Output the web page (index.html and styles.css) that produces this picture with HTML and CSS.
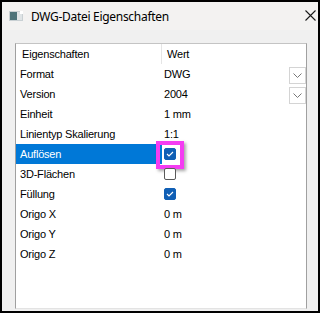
FILE: index.html
```html
<!DOCTYPE html>
<html lang="de">
<head>
    <meta charset="UTF-8">
    <title>DWG-Datei Eigenschaften</title>
    <link rel="stylesheet" href="styles.css">
</head>
<body>
    <div class="window">
        <div class="titlebar">
            <svg class="app-icon" width="14" height="10" viewBox="0 0 14 10">
                <rect x="0" y="0" width="14" height="10" fill="#c9d0d3"/>
                <rect x="1" y="1" width="7" height="8" fill="#4d7379"/>
                <rect x="8" y="1" width="5" height="8" fill="#dfe4e6"/>
                <rect x="11" y="0" width="3" height="3" fill="#ffffff"/>
            </svg>
            <span class="title">DWG-Datei Eigenschaften</span>
            <svg class="close" width="11" height="11" viewBox="0 0 11 11">
                <path d="M0.5 0.5 L10.5 10.5 M10.5 0.5 L0.5 10.5" stroke="#1a1a1a" stroke-width="1.1"/>
            </svg>
        </div>
        <div class="content">
            <div class="grid">
                <div class="row header">
                    <div class="name">Eigenschaften</div>
                    <div class="value">Wert</div>
                </div>
                <div class="row">
                    <div class="name">Format</div>
                    <div class="value">DWG<span class="drop"><svg width="9" height="5" viewBox="0 0 9 5"><path d="M0.5 0.5 L4.5 4.5 L8.5 0.5" fill="none" stroke="#777" stroke-width="1"/></svg></span></div>
                </div>
                <div class="row">
                    <div class="name">Version</div>
                    <div class="value">2004<span class="drop"><svg width="9" height="5" viewBox="0 0 9 5"><path d="M0.5 0.5 L4.5 4.5 L8.5 0.5" fill="none" stroke="#777" stroke-width="1"/></svg></span></div>
                </div>
                <div class="row">
                    <div class="name">Einheit</div>
                    <div class="value">1 mm</div>
                </div>
                <div class="row">
                    <div class="name">Linientyp Skalierung</div>
                    <div class="value">1:1</div>
                </div>
                <div class="row selected">
                    <div class="name">Auflösen</div>
                    <div class="value">
                        <span class="check on"><svg width="8" height="6" viewBox="0 0 8 6"><path d="M1 3 L3 5 L7 1" fill="none" stroke="#fff" stroke-width="1.1"/></svg><span class="mark"></span></span>
                    </div>
                </div>
                <div class="row">
                    <div class="name">3D-Flächen</div>
                    <div class="value"><span class="check"></span></div>
                </div>
                <div class="row">
                    <div class="name">Füllung</div>
                    <div class="value"><span class="check on"><svg width="8" height="6" viewBox="0 0 8 6"><path d="M1 3 L3 5 L7 1" fill="none" stroke="#fff" stroke-width="1.1"/></svg></span></div>
                </div>
                <div class="row">
                    <div class="name">Origo X</div>
                    <div class="value">0 m</div>
                </div>
                <div class="row">
                    <div class="name">Origo Y</div>
                    <div class="value">0 m</div>
                </div>
                <div class="row">
                    <div class="name">Origo Z</div>
                    <div class="value">0 m</div>
                </div>
            </div>
        </div>
    </div>
</body>
</html>
```

FILE: styles.css
```css
body {
    margin: 0;
    background-color: #000;
    font-family: "Liberation Sans", Arial, sans-serif;
}
.window {
    width: 320px;
    height: 313px;
    box-sizing: border-box;
    border: 2px solid #000;
    background-color: #f0f0f0;
    display: flex;
    flex-direction: column;
}
.titlebar {
    height: 28px;
    background-color: #f3f2f1;
    display: flex;
    align-items: center;
    padding: 0 2px 0 7px;
    flex-shrink: 0;
}
.app-icon {
    margin-right: 8px;
    margin-top: -1px;
}
.title {
    font-family: "Noto Sans", sans-serif;
    font-size: 12px;
    letter-spacing: -0.3px;
    color: #000;
    flex: 1;
}
.close {
    margin-top: -2px;
}
.content {
    flex: 1;
    padding: 13px 11px 2px 13px;
    display: flex;
}
.grid {
    flex: 1;
    background-color: #fff;
    border: 1px solid #a0a0a0;
    border-top-color: #c4c4c4;
    border-bottom-color: #e3e3e3;
    font-size: 11px;
    letter-spacing: -0.2px;
    color: #000;
}
.row {
    display: flex;
    height: 20px;
    align-items: center;
}
.name {
    width: 146px;
    height: 100%;
    display: flex;
    align-items: center;
    padding-left: 4px;
    box-sizing: border-box;
}
.value {
    flex: 1;
    height: 100%;
    display: flex;
    align-items: center;
    padding-left: 2px;
    position: relative;
}
.header .name {
    padding-left: 6px;
    border-right: 1px solid #e5e5e5;
}
.header .value {
    padding-left: 5px;
}
.selected .name {
    background-color: #0078d7;
    color: #fff;
}
.drop {
    margin-left: auto;
    margin-right: 0;
    width: 15px;
    height: 15px;
    border: 1px solid #d4d4d4;
    display: flex;
    align-items: center;
    justify-content: center;
    margin-top: 2px;
}
.check {
    width: 12px;
    height: 12px;
    box-sizing: border-box;
    border: 1px solid #5a5a5a;
    border-radius: 2px;
    background-color: #fff;
    display: flex;
    align-items: center;
    justify-content: center;
    position: relative;
}
.check.on {
    background-color: #105fb5;
    border-color: #105fb5;
}
.mark {
    position: absolute;
    left: -9px;
    top: -8px;
    width: 20px;
    height: 20px;
    border: 4px solid #f43cf2;
    box-shadow: 2px 2px 3px rgba(0, 0, 0, 0.35);
}
```
